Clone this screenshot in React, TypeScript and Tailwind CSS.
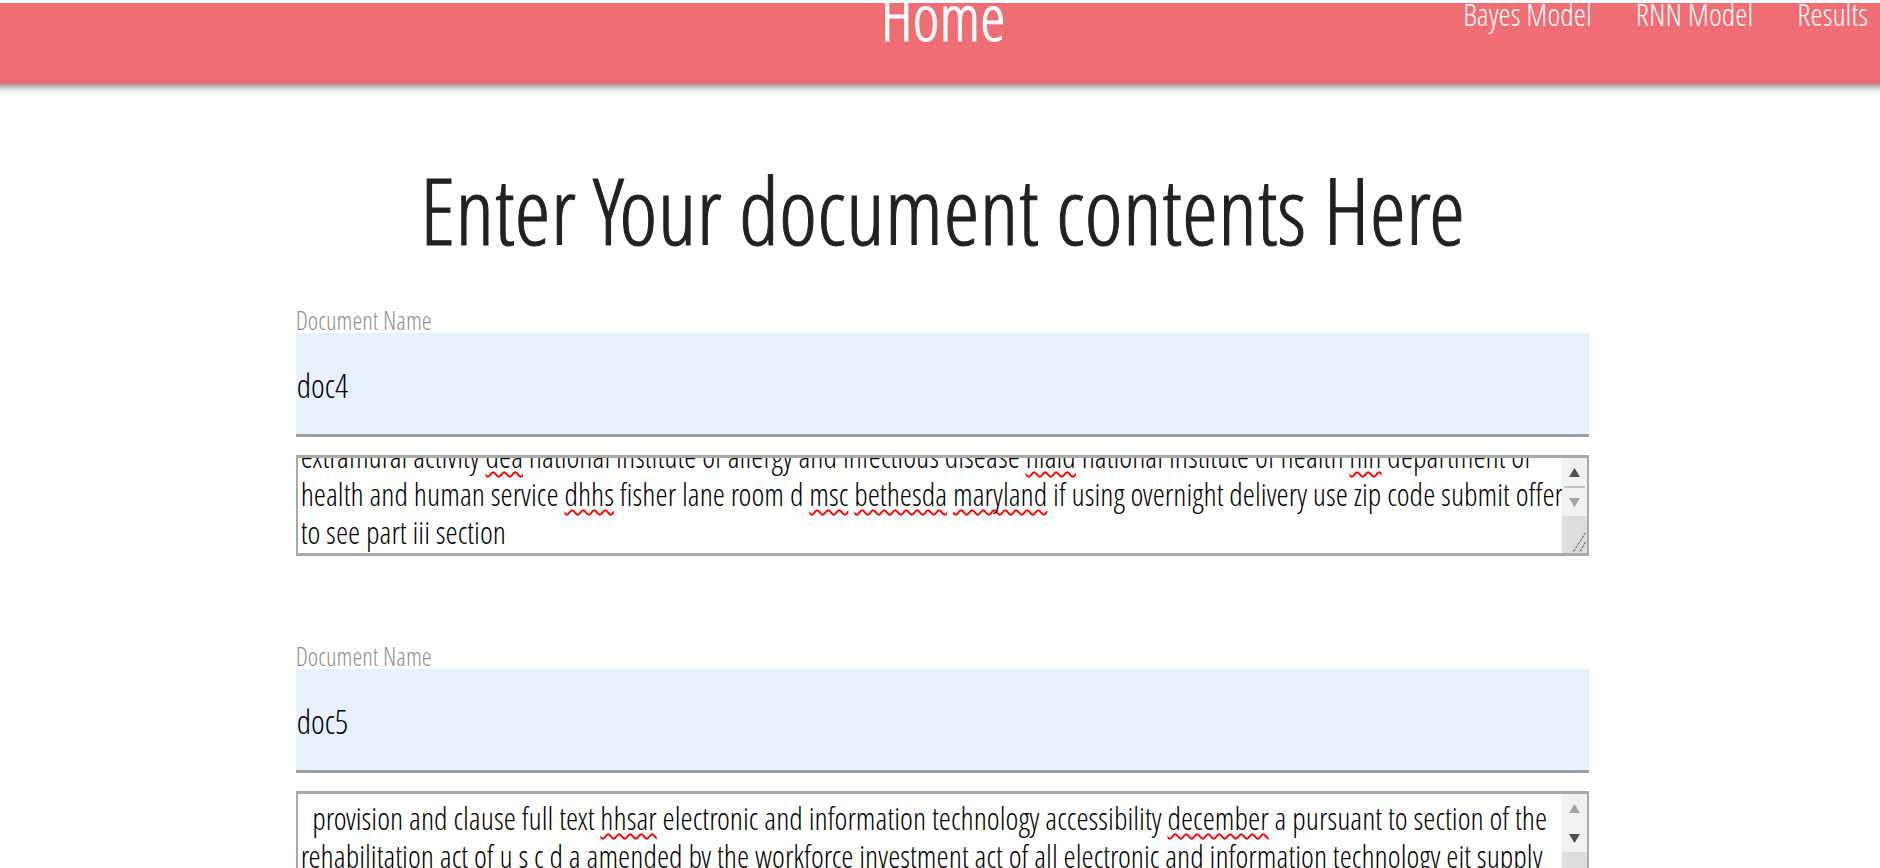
import { useEffect, useRef } from "react";

type Piece = { text: string; flagged?: boolean };

type Doc = {
  id: string;
  name: string;
  lines: Piece[][];
  scroll: number;
  atEnd: boolean;
};

const docs: Doc[] = [
  {
    id: "doc4",
    name: "doc4",
    scroll: 26,
    atEnd: true,
    lines: [
      [
        { text: "extramural activity " },
        { text: "dea", flagged: true },
        { text: " national institute of allergy and infectious disease " },
        { text: "niaid", flagged: true },
        { text: " national institute of health " },
        { text: "nih", flagged: true },
        { text: " department of" },
      ],
      [
        { text: "health and human service " },
        { text: "dhhs", flagged: true },
        { text: " fisher lane room d " },
        { text: "msc", flagged: true },
        { text: " " },
        { text: "bethesda", flagged: true },
        { text: " " },
        { text: "maryland", flagged: true },
        { text: " if using overnight delivery use zip code submit offer" },
      ],
      [{ text: "to see part iii section" }],
    ],
  },
  {
    id: "doc5",
    name: "doc5",
    scroll: 0,
    atEnd: false,
    lines: [
      [
        { text: "  provision and clause full text " },
        { text: "hhsar", flagged: true },
        { text: " electronic and information technology accessibility " },
        { text: "december", flagged: true },
        { text: " a pursuant to section of the" },
      ],
      [
        {
          text: "rehabilitation act of u s c d a amended by the workforce investment act of all electronic and information technology eit supply",
        },
      ],
    ],
  },
];

function ScrollRail({ atEnd }: { atEnd: boolean }) {
  return (
    <div className="flex w-[25px] shrink-0 flex-col bg-[#f1f1f1]">
      <button
        type="button"
        aria-label="Scroll up"
        className={`flex h-[28px] items-center justify-center ${atEnd ? "text-[#505050]" : "text-[#a3a3a3]"}`}
      >
        <svg width="11" height="9" viewBox="0 0 11 9" fill="currentColor">
          <path d="M5.5 0 11 9H0z" />
        </svg>
      </button>
      <div className={`mx-[2px] h-[2px] ${atEnd ? "bg-[#c1c1c1]" : "bg-[#f1f1f1]"}`} />
      <button
        type="button"
        aria-label="Scroll down"
        className={`flex h-[28px] items-center justify-center ${atEnd ? "text-[#a3a3a3]" : "text-[#505050]"}`}
      >
        <svg width="11" height="9" viewBox="0 0 11 9" fill="currentColor">
          <path d="M0 0h11L5.5 9z" />
        </svg>
      </button>
      <div className="flex grow items-end justify-end bg-[#dcdcdc] p-px">
        <svg width="13" height="20" viewBox="0 0 13 20" fill="none" stroke="#505050">
          <path d="M.5 19.500 12.500 1" strokeDasharray="3 1" />
          <path d="M7 19.500 12.500 10" strokeDasharray="3 1" />
        </svg>
      </div>
    </div>
  );
}

function DocumentEntry({ doc }: { doc: Doc }) {
  const area = useRef<HTMLTextAreaElement>(null);
  const marks = useRef<HTMLDivElement>(null);

  useEffect(() => {
    if (area.current) area.current.scrollTop = doc.scroll;
    if (marks.current) marks.current.scrollTop = doc.scroll;
  }, [doc.scroll]);

  const value = doc.lines.map((l) => l.map((p) => p.text).join("")).join("\n");

  return (
    <section>
      <label htmlFor={doc.id} className="block pt-[2px] text-[25px] leading-[26px] text-[#8f8f8f]">
        Document Name
      </label>
      <input
        id={doc.id}
        type="text"
        defaultValue={doc.name}
        className="block h-[104px] w-full border-b-[3px] border-[#9e9e9e] bg-[#e8f0fe] pt-[4px] pl-px text-[33px] text-black outline-none"
      />
      <div className="mt-[18px] flex h-[101px] w-full border-x-2 border-y-[3px] border-[#a9a9a9] bg-white">
        <div className="relative min-w-0 grow text-[31px] leading-[38px] text-black">
          <div
            ref={marks}
            aria-hidden="true"
            className="absolute inset-0 overflow-hidden py-[5px] pl-[3px] whitespace-pre text-transparent"
          >
            {doc.lines.map((line, i) => (
              <div key={i}>
                {line.map((p, j) =>
                  p.flagged ? (
                    <span
                      key={j}
                      className="underline decoration-[#ff0000] decoration-wavy decoration-2 underline-offset-[3px] [text-decoration-skip-ink:none]"
                    >
                      {p.text}
                    </span>
                  ) : (
                    <span key={j}>{p.text}</span>
                  ),
                )}
              </div>
            ))}
          </div>
          <textarea
            ref={area}
            aria-label={`Contents of ${doc.name}`}
            spellCheck={false}
            defaultValue={value}
            className="relative block h-full w-full resize-none overflow-hidden bg-transparent py-[5px] pl-[3px] whitespace-pre outline-none"
          />
        </div>
        <ScrollRail atEnd={doc.atEnd} />
      </div>
    </section>
  );
}

export default function App() {
  return (
    <div className="h-screen overflow-hidden bg-white pt-[3px] font-['Open_Sans_Condensed_Light','Roboto_Condensed',sans-serif]">
      <nav className="grid h-[81px] grid-cols-[1fr_auto_1fr] items-start bg-[#f06e73] pr-[12px] pl-[18px] text-white">
        <span />
        <a href="#home" className="text-[64px] leading-[28px] [-webkit-text-stroke:1px]">
          Home
        </a>
        <div className="flex justify-end gap-[44px] text-[31px] leading-[22px]">
          <a href="#bayes">Bayes Model</a>
          <a href="#rnn">RNN Model</a>
          <a href="#results">Results</a>
        </div>
      </nav>
      <div className="h-[12px] bg-linear-to-b from-[#a0a0a0] via-[#e8e8e8] to-white" />
      <main className="pl-[5px]">
        <h1 className="pt-[54px] text-center text-[92px] leading-[120px] text-[#212121] [-webkit-text-stroke:1px]">
          Enter Your document contents Here
        </h1>
        <form className="mx-auto flex w-[69%] flex-col gap-[85px] pt-[35px]">
          {docs.map((d) => (
            <DocumentEntry key={d.id} doc={d} />
          ))}
        </form>
      </main>
    </div>
  );
}
